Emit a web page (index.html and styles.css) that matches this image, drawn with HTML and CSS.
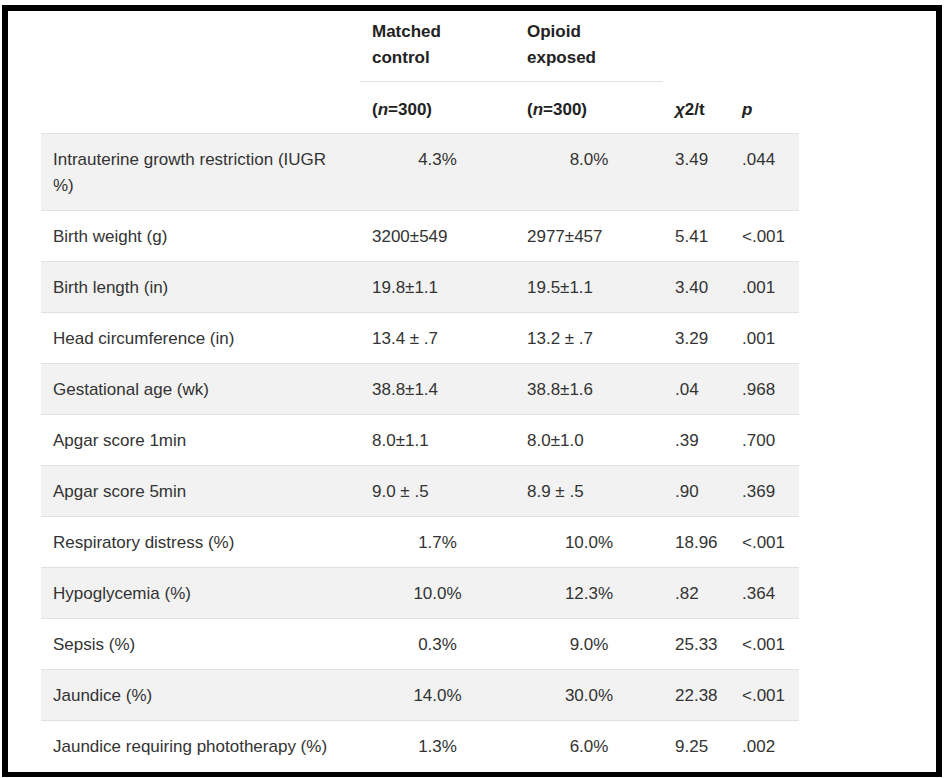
FILE: index.html
```html
<!DOCTYPE html>
<html lang="en">
<head>
<meta charset="utf-8">
<title>Neonatal outcomes</title>
<link rel="stylesheet" href="styles.css">
</head>
<body>
<div class="frame">
  <table class="data">
    <colgroup>
      <col class="c-label">
      <col class="c-ctrl">
      <col class="c-opi">
      <col class="c-stat">
      <col class="c-p">
    </colgroup>
    <thead>
      <tr class="head-top">
        <th rowspan="2" class="blank"></th>
        <th class="group">Matched<br>control</th>
        <th class="group">Opioid<br>exposed</th>
        <th rowspan="2" class="bottom"><i>χ</i>2/t</th>
        <th rowspan="2" class="bottom"><i>p</i></th>
      </tr>
      <tr class="head-sub">
        <th>(<i>n</i>=300)</th>
        <th>(<i>n</i>=300)</th>
      </tr>
    </thead>
    <tbody>
      <tr><td>Intrauterine growth restriction (IUGR<br>%)</td><td class="ctr">4.3%</td><td class="ctr">8.0%</td><td>3.49</td><td>.044</td></tr>
      <tr><td>Birth weight (g)</td><td>3200±549</td><td>2977±457</td><td>5.41</td><td>&lt;.001</td></tr>
      <tr><td>Birth length (in)</td><td>19.8±1.1</td><td>19.5±1.1</td><td>3.40</td><td>.001</td></tr>
      <tr><td>Head circumference (in)</td><td>13.4 ± .7</td><td>13.2 ± .7</td><td>3.29</td><td>.001</td></tr>
      <tr><td>Gestational age (wk)</td><td>38.8±1.4</td><td>38.8±1.6</td><td>.04</td><td>.968</td></tr>
      <tr><td>Apgar score 1min</td><td>8.0±1.1</td><td>8.0±1.0</td><td>.39</td><td>.700</td></tr>
      <tr><td>Apgar score 5min</td><td>9.0 ± .5</td><td>8.9 ± .5</td><td>.90</td><td>.369</td></tr>
      <tr><td>Respiratory distress (%)</td><td class="ctr">1.7%</td><td class="ctr">10.0%</td><td>18.96</td><td>&lt;.001</td></tr>
      <tr><td>Hypoglycemia (%)</td><td class="ctr">10.0%</td><td class="ctr">12.3%</td><td>.82</td><td>.364</td></tr>
      <tr><td>Sepsis (%)</td><td class="ctr">0.3%</td><td class="ctr">9.0%</td><td>25.33</td><td>&lt;.001</td></tr>
      <tr><td>Jaundice (%)</td><td class="ctr">14.0%</td><td class="ctr">30.0%</td><td>22.38</td><td>&lt;.001</td></tr>
      <tr><td>Jaundice requiring phototherapy (%)</td><td class="ctr">1.3%</td><td class="ctr">6.0%</td><td>9.25</td><td>.002</td></tr>
    </tbody>
  </table>
</div>
</body>
</html>
```

FILE: styles.css
```css
html, body {
  margin: 0;
  padding: 0;
  background: #fff;
}

body {
  font-family: "Liberation Sans", Arial, Helvetica, sans-serif;
  font-size: 17px;
  line-height: 26px;
  color: #333;
}

.frame {
  box-sizing: border-box;
  margin: 5px 2px 0;
  height: 772px;
  border: 6px solid #000;
  border-bottom-width: 5px;
  overflow: hidden;
  background: #fff;
}

.data {
  margin-left: 33px;
  width: 758px;
  border-collapse: collapse;
  table-layout: fixed;
}

.c-label { width: 319px; }
.c-ctrl { width: 155px; }
.c-opi { width: 148px; }
.c-stat { width: 67px; }
.c-p { width: 69px; }

.data th {
  text-align: left;
  font-weight: bold;
  color: #222;
  padding: 15px 12px 10px;
  vertical-align: bottom;
}

.head-top .group {
  padding: 8px 12px 10px;
  border-bottom: 1px solid #dee2e6;
}

.head-top .blank,
.head-top .bottom,
.head-sub th {
  border-bottom: 1px solid #dee2e6;
}

.data td {
  padding: 13px 12px 11px;
  border-top: 1px solid #dee2e6;
  vertical-align: top;
  text-align: left;
}

.data td.ctr {
  text-align: center;
}

.data tbody tr:nth-child(odd) td {
  background: #f2f2f2;
}
```
